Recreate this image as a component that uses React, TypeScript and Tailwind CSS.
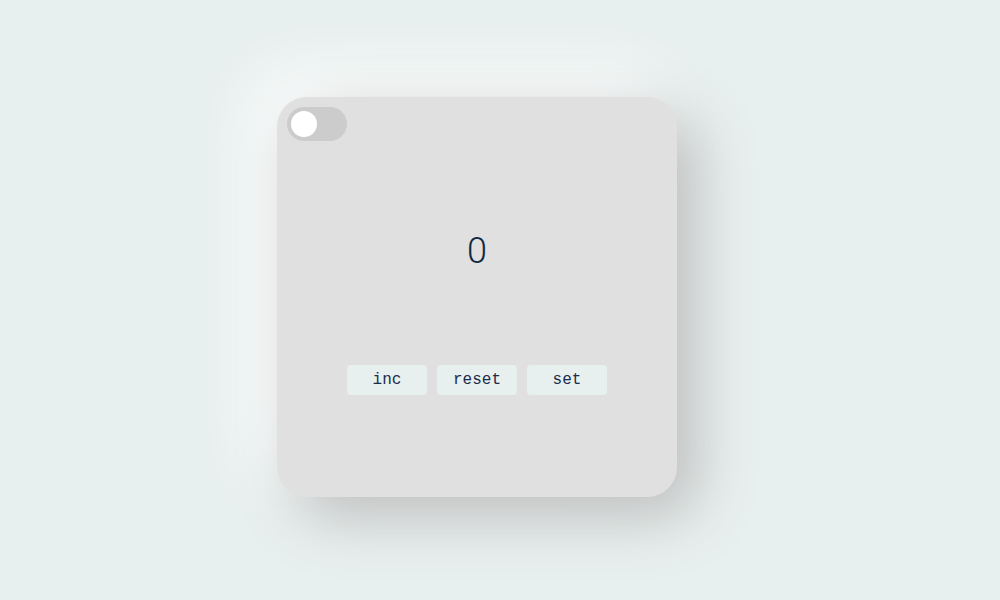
import { useState } from 'react';

export default function App() {
  const [count, setCount] = useState(0);
  const [on, setOn] = useState(false);

  return (
    <div className="min-h-screen w-full bg-[#e8f0ef] flex items-center justify-center">
      <div className="w-[400px] h-[400px] mr-[46px] mb-[6px] rounded-[30px] bg-[#e0e0e0] shadow-[20px_20px_60px_#bebebe,-20px_-20px_60px_#ffffff] flex flex-col p-[10px]">
        {/* Toggle */}
        <button
          onClick={() => setOn(!on)}
          className={`w-[60px] h-[34px] rounded-full bg-[#cccccc] flex items-center px-[4px] ${on ? 'justify-end' : 'justify-start'}`}
        >
          <span className="block w-[26px] h-[26px] rounded-full bg-white" />
        </button>

        {/* Counter */}
        <div className="mt-[92px] text-center text-[36px] leading-[36px] font-light text-[#102a43] font-['Roboto',sans-serif]">
          {count}
        </div>

        {/* Buttons */}
        <div className="mt-[96px] flex justify-center gap-[10px]">
          <button
            onClick={() => setCount(count + 1)}
            className="w-[80px] h-[30px] rounded-[4px] bg-[#e8f0ef] text-[16px] text-[#1b2d4a] font-['Courier_New','Nimbus_Mono_PS','FreeMono','Liberation_Mono',monospace]"
          >
            inc
          </button>
          <button
            onClick={() => setCount(0)}
            className="w-[80px] h-[30px] rounded-[4px] bg-[#e8f0ef] text-[16px] text-[#1b2d4a] font-['Courier_New','Nimbus_Mono_PS','FreeMono','Liberation_Mono',monospace]"
          >
            reset
          </button>
          <button
            onClick={() => setCount(10)}
            className="w-[80px] h-[30px] rounded-[4px] bg-[#e8f0ef] text-[16px] text-[#1b2d4a] font-['Courier_New','Nimbus_Mono_PS','FreeMono','Liberation_Mono',monospace]"
          >
            set
          </button>
        </div>
      </div>
    </div>
  );
}
